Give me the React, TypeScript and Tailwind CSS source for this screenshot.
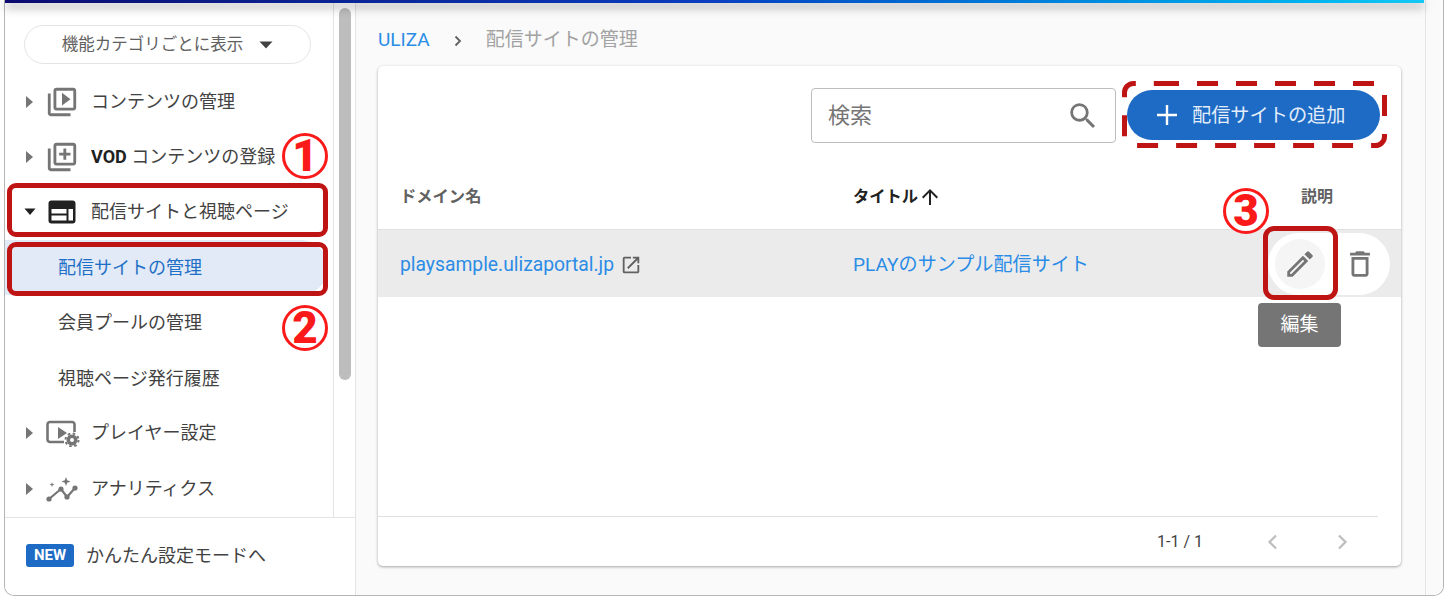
import React from "react";

const FONT = "font-['Roboto','Noto_Sans_CJK_JP',sans-serif]";

function Caret({ open }: { open?: boolean }) {
  return open ? (
    <svg width="12" height="8" viewBox="0 0 12 8" className="shrink-0"><path d="M0.500 0.500h11L6 7z" fill="#212121" /></svg>
  ) : (
    <svg width="10" height="14" viewBox="0 0 10 14" className="shrink-0"><path d="M2 1l7 6-7 6z" fill="#757575" /></svg>
  );
}

function IconBox({ children }: { children: React.ReactNode }) {
  return (
    <svg width="34" height="34" viewBox="0 0 24 24" fill="#757575" className="shrink-0">
      {children}
    </svg>
  );
}

function NavRow({ icon, label, open }: { icon: React.ReactNode; label: React.ReactNode; open?: boolean }) {
  return (
    <div className="flex h-[55.300px] items-center pl-[19px]">
      <div className="flex w-[17px] justify-start"><Caret open={open} /></div>
      <div className="ml-[4px] flex w-[34px] justify-center">{icon}</div>
      <div className="ml-[12px] text-[18px] leading-none text-[#424242]">{label}</div>
    </div>
  );
}

function SubRow({ children, active }: { children: React.ReactNode; active?: boolean }) {
  return (
    <div className={active ? "mr-[5px] flex h-[55.300px] items-center rounded-r-[28px] bg-[#e1eaf6] pl-[53px] text-[18px] text-[#1f6fc6]" : "flex h-[55.300px] items-center pl-[53px] text-[18px] text-[#424242]"}>
      {children}
    </div>
  );
}

function Num({ children, className }: { children: string; className: string }) {
  return (
    <div className={"absolute flex h-[46px] w-[46px] items-center justify-center rounded-full border-[3px] border-[#fb1a1a] bg-white text-[44px] font-black leading-none text-[#fb1a1a] " + className}>
      {children}
    </div>
  );
}

export default function App() {
  return (
    <div className={"relative h-[600px] w-[1448px] overflow-hidden bg-white " + FONT}>
      <div className="mx-[4px] flex h-[596px] flex-col overflow-hidden rounded-b-[10px] border-x border-b border-[#b5b5b5] bg-[#fafafa]">
        <div className="flex min-h-0 flex-1">
          <div className="flex w-[350px] shrink-0 flex-col bg-white">
            <div className="flex min-h-0 flex-1">
              <div className="w-[329px] border-r border-[#e4e4e4]">
                <div className="pb-[10px] pl-[19px] pr-[22px] pt-[25px]">
                  <div className="flex h-[39px] items-center justify-center gap-[16px] rounded-full border border-[#e4e4e4] pt-[1px] text-[16.500px] text-[#616161]">
                    <span>機能カテゴリごとに表示</span>
                    <svg width="14" height="8" viewBox="0 0 14 8"><path d="M0.500 0.500h13L7 7.500z" fill="#424242" /></svg>
                  </div>
                </div>
                <NavRow
                  label="コンテンツの管理"
                  icon={<IconBox><path d="M4 6H2v14c0 1.100.9 2 2 2h14v-2H4V6zm16-4H8c-1.100 0-2 .9-2 2v12c0 1.100.9 2 2 2h12c1.100 0 2-.9 2-2V4c0-1.100-.9-2-2-2zm0 14H8V4h12v12zM12 5.500v9l6-4.500z" /></IconBox>}
                />
                <NavRow
                  label={<span><b className="font-bold text-[#212121]">VOD</b> コンテンツの登録</span>}
                  icon={<IconBox><path d="M4 6H2v14c0 1.100.9 2 2 2h14v-2H4V6zm16-4H8c-1.100 0-2 .9-2 2v12c0 1.100.9 2 2 2h12c1.100 0 2-.9 2-2V4c0-1.100-.9-2-2-2zm0 14H8V4h12v12zm-7-2h2v-3h3V9h-3V6h-2v3h-3v2h3z" /></IconBox>}
                />
                <NavRow
                  open
                  label="配信サイトと視聴ページ"
                  icon={
                    <svg width="28" height="24" viewBox="0 0 28 24" className="shrink-0">
                      <rect x="0.500" y="0.500" width="27" height="23" rx="3" fill="#212121" />
                      <rect x="3.500" y="9" width="15" height="4.500" fill="#fff" />
                      <rect x="3.500" y="15.500" width="15" height="5" fill="#fff" />
                      <rect x="20.500" y="9" width="4.500" height="11.500" fill="#fff" />
                    </svg>
                  }
                />
                <SubRow active>配信サイトの管理</SubRow>
                <SubRow>会員プールの管理</SubRow>
                <SubRow>視聴ページ発行履歴</SubRow>
                <NavRow
                  label="プレイヤー設定"
                  icon={
                    <svg width="34" height="28" viewBox="0 0 34 28" className="ml-[2px] shrink-0">
                      <path d="M18 23H4a2.500 2.500 0 0 1-2.500-2.500V5.500A2.500 2.500 0 0 1 4 3h22a2.500 2.500 0 0 1 2.500 2.500V13" fill="none" stroke="#757575" strokeWidth="2.600" />
                      <path d="M12 8l9 6-9 6z" fill="#757575" />
                      <circle cx="26" cy="21" r="5.500" fill="#757575" />
                      <circle cx="26" cy="21" r="6.500" fill="none" stroke="#757575" strokeWidth="2" strokeDasharray="2.500 2.600" />
                      <circle cx="26" cy="21" r="2" fill="#fff" />
                    </svg>
                  }
                />
                <NavRow
                  label="アナリティクス"
                  icon={
                    <svg width="32" height="26" viewBox="0 0 32 26" className="shrink-0">
                      <path d="M3 23l12-10 6 8 8-9" fill="none" stroke="#757575" strokeWidth="2.200" />
                      <circle cx="3" cy="23" r="2.600" fill="#757575" /><circle cx="15" cy="13" r="2.600" fill="#757575" /><circle cx="21" cy="21" r="2.600" fill="#757575" /><circle cx="29" cy="12" r="2.600" fill="#757575" />
                      <path d="M20 1l1.200 3.300 3.300 1.200-3.300 1.200L20 10l-1.200-3.300-3.300-1.200 3.300-1.200zM6 6l.6 2 2 .6-2 .6L6 11.200l-.6-2-2-.6 2-.6z" fill="#757575" />
                    </svg>
                  }
                />
              </div>
              <div className="w-[21px] pl-[5px] pt-[8px]">
                <div className="h-[372px] w-[12px] rounded-full bg-[#bdbdbd]" />
              </div>
            </div>
            <div className="flex h-[78px] shrink-0 items-center border-t border-[#e4e4e4] pb-[2px] pl-[21px]">
              <span className="flex h-[23px] w-[48px] items-center justify-center rounded-[3px] bg-[#1e6bc5] text-[15px] font-bold text-white">NEW</span>
              <span className="ml-[12px] text-[18px] text-[#424242]">かんたん設定モードへ</span>
            </div>
          </div>

          <div className="flex min-w-0 flex-1 border-l border-[#e4e4e4]">
            <div className="flex min-w-0 flex-1 flex-col pl-[22px] pr-[24px]">
              <div className="flex h-[66px] shrink-0 items-center pt-[15px] text-[19px]">
                <span className="text-[#2b8ce6]">ULIZA</span>
                <svg width="12" height="12" viewBox="0 0 12 12" className="mx-[22px]"><path d="M3.500 1.500 8 6l-4.500 4.500" fill="none" stroke="#616161" strokeWidth="1.800" /></svg>
                <span className="text-[#a2a2a2]">配信サイトの管理</span>
              </div>
              <div className="flex h-[500px] shrink-0 flex-col rounded-[5px] bg-white shadow-[0_1px_3px_rgba(0,0,0,0.35)]">
                <div className="flex h-[99px] shrink-0 items-start justify-end pr-[21px] pt-[22px]">
                  <div className="flex h-[55px] w-[305px] items-center justify-between rounded-[4px] border border-[#bdbdbd] pl-[16px] pr-[15px] text-[22px] text-[#757575]">
                    <span>検索</span>
                    <svg width="34" height="34" viewBox="0 0 24 24" fill="#757575"><path d="M15.500 14h-.79l-.28-.27A6.470 6.470 0 0 0 16 9.500 6.500 6.500 0 1 0 9.500 16c1.610 0 3.090-.59 4.230-1.570l.27.28v.79l5 4.990L20.490 19l-4.990-5zm-6 0C7.010 14 5 11.990 5 9.500S7.010 5 9.500 5 14 7.010 14 9.500 11.990 14 9.500 14z" /></svg>
                  </div>
                  <div className="ml-[11px] mt-[2px] flex h-[50px] w-[253px] items-center rounded-full bg-[#1e6bc5] pl-[28px] text-[19.200px] text-[#e3eefa]">
                    <svg width="24" height="24" viewBox="0 0 24 24" fill="none" stroke="#fff" strokeWidth="2.400"><path d="M12 2v20M2 12h20" /></svg>
                    <span className="ml-[13px] pt-[2px]">配信サイトの追加</span>
                  </div>
                </div>
                <div className="flex h-[65px] shrink-0 items-center border-b border-[#e0e0e0] text-[16.300px] font-bold">
                  <div className="w-[475px] pl-[22px] text-[#616161]">ドメイン名</div>
                  <div className="flex w-[410px] items-center text-[#212121]">
                    タイトル
                    <svg width="24" height="24" viewBox="0 0 24 24" fill="#212121"><path d="M4 12l1.410 1.410L11 7.830V20h2V7.830l5.580 5.590L20 12l-8-8-8 8z" /></svg>
                  </div>
                  <div className="ml-[38px] text-[16px] text-[#616161]">説明</div>
                </div>
                <div className="flex h-[67px] shrink-0 items-center bg-[#ebebeb] text-[#2b8ce6]">
                  <div className="flex w-[475px] items-center pl-[22px] text-[19.300px]">
                    <span className="pt-[3px]">playsample.ulizaportal.jp</span>
                    <svg width="22" height="22" viewBox="0 0 24 24" fill="#616161" className="ml-[6px] mt-[3px]"><path d="M19 19H5V5h7V3H5a2 2 0 0 0-2 2v14a2 2 0 0 0 2 2h14c1.100 0 2-.9 2-2v-7h-2v7zM14 3v2h3.590l-9.830 9.830 1.410 1.410L19 6.410V10h2V3h-7z" /></svg>
                  </div>
                  <div className="w-[415px] pt-[3px] text-[19.100px]">PLAYのサンプル配信サイト</div>
                  <div className="mr-[11px] flex h-[62px] flex-1 items-center rounded-full bg-white pl-[7px]">
                    <div className="flex h-[50px] w-[50px] items-center justify-center rounded-full bg-[#f5f5f5]">
                      <svg width="34" height="34" viewBox="0 0 24 24" fill="#757575"><path d="M3 17.250V21h3.750L17.810 9.940l-3.750-3.750L3 17.250zM5.920 19H5v-.92l9.060-9.060.92.92L5.920 19zM20.710 7.040a1 1 0 0 0 0-1.410l-2.340-2.340a1 1 0 0 0-1.410 0l-1.830 1.830 3.750 3.750 1.830-1.830z" /></svg>
                    </div>
                    <svg width="34" height="34" viewBox="0 0 24 24" fill="#757575" className="ml-[18px]"><path d="M16 9v10H8V9h8m-1.500-6h-5l-1 1H5v2h14V4h-3.500l-1-1zM18 7H6v12c0 1.100.9 2 2 2h8c1.100 0 2-.9 2-2V7z" /></svg>
                  </div>
                </div>
                <div className="flex-1" />
                <div className="mr-[23px] flex h-[50px] shrink-0 items-center border-t border-[#e0e0e0] text-[16px] text-[#424242]">
                  <div className="ml-auto">1-1 / 1</div>
                  <svg width="20" height="20" viewBox="0 0 20 20" fill="none" stroke="#bdbdbd" strokeWidth="2.200" className="ml-[60px]"><path d="M13 3.500 6.500 10l6.500 6.500" /></svg>
                  <svg width="20" height="20" viewBox="0 0 20 20" fill="none" stroke="#bdbdbd" strokeWidth="2.200" className="ml-[49px] mr-[26px]"><path d="M7 3.500 13.500 10 7 16.500" /></svg>
                </div>
              </div>
            </div>
            <div className="w-[18px] shrink-0 border-l border-[#e4e4e4] bg-[#fafafa]" />
          </div>
        </div>
      </div>

      <div className="absolute left-[5px] top-0 h-[3px] w-[1419px] bg-gradient-to-r from-[#0a0a70] via-[#0a3ec0] to-[#14c8f5] shadow-[0_4px_10px_rgba(0,0,0,0.5)]" />

      <div className="absolute left-[7px] top-[183px] h-[54px] w-[321px] rounded-[9px] border-[5px] border-[#bf1414]" />
      <div className="absolute left-[7px] top-[242px] h-[54px] w-[321px] rounded-[9px] border-[5px] border-[#bf1414]" />
      <div className="absolute left-[1263px] top-[226px] h-[74px] w-[75px] rounded-[11px] border-[5px] border-[#bf1414]" />
      <svg width="271" height="72" viewBox="0 0 271 72" fill="none" className="absolute left-[1119px] top-[79px]">
        <path d="M39 4.500H256.500a9 9 0 0 1 9 9V57.500a9 9 0 0 1-9 9H14.500a9 9 0 0 1-9-9V13.500a9 9 0 0 1 9-9H39" stroke="#bf1414" strokeWidth="5" strokeDasharray="21 18" />
      </svg>
      <Num className="left-[282px] top-[133px]">1</Num>
      <Num className="left-[282px] top-[305px]">2</Num>
      <Num className="left-[1223px] top-[188px]">3</Num>
      <div className="absolute left-[1258px] top-[303px] flex h-[44px] w-[83px] items-center justify-center rounded-[4px] bg-[#757575] pt-[1px] text-[19px] text-white">編集</div>
    </div>
  );
}
